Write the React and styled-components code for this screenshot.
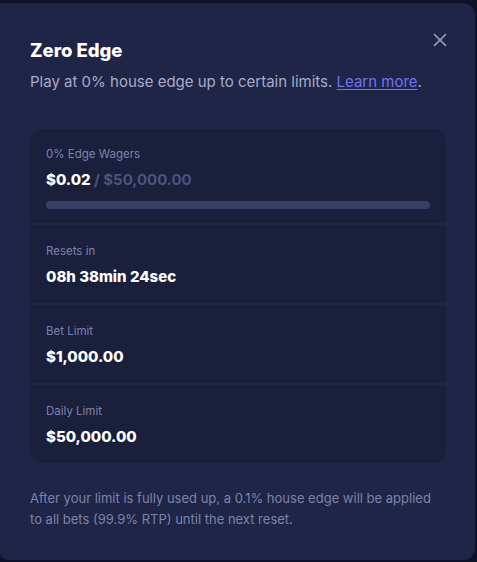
import styled, { createGlobalStyle } from "styled-components";

const Global = createGlobalStyle`
  html, body {
    margin: 0;
    padding: 0;
    background: #0e1128;
  }
  body {
    font-family: Inter, "Noto Sans", sans-serif;
    -webkit-font-smoothing: antialiased;
  }
`

const Modal = styled.div`
  box-sizing: border-box;
  height: 557px;
  margin: 3px 2px 2px 0;
  background: #1f2546;
  border-radius: 0 12px 12px 8px;
  padding: 34px 29px 0 30px;
  position: relative;
`

const Title = styled.h2`
  margin: 0;
  font-size: 18.5px;
  font-weight: 800;
  color: #ffffff;
  line-height: 26px;
`

const Subtitle = styled.p`
  margin: 8px 0 0 0;
  font-size: 15px;
  line-height: 22px;
  color: #a6abc8;
`

const Link = styled.a`
  color: #6d72f6;
  text-decoration: underline;
  text-underline-offset: 2px;
`

const Close = styled.button`
  position: absolute;
  top: 27px;
  right: 25px;
  width: 20px;
  height: 20px;
  padding: 0;
  border: none;
  background: none;
  display: flex;
  align-items: center;
  justify-content: center;
  cursor: pointer;
`

const Card = styled.div`
  margin-top: 36px;
  border-radius: 12px;
  overflow: hidden;
  display: flex;
  flex-direction: column;
  gap: 2px;
  background: #20264a;
`

const Row = styled.div`
  background: #1a1f3c;
  padding: ${(p) => (p.$first ? "18px 16px 16px" : "19px 16px 18px")};
  height: ${(p) => (p.$first ? "94px" : "78px")};
  box-sizing: border-box;
`

const Label = styled.div`
  font-size: 11.5px;
  line-height: 14px;
  color: #7c84ab;
`

const Value = styled.div`
  margin-top: 10px;
  font-size: 15px;
  line-height: 18px;
  font-weight: 800;
  color: #ffffff;
`

const Muted = styled.span`
  color: #4a5380;
  font-weight: 700;
`

const Track = styled.div`
  margin-top: 12px;
  height: 8px;
  border-radius: 4px;
  background: #363f68;
`

const Fill = styled.div`
  height: 100%;
  border-radius: 4px;
  background: #6d72f6;
`

const Note = styled.p`
  margin: 25px 0 0 0;
  font-size: 13px;
  line-height: 21px;
  color: #7c83a9;
`

const stats = [
  { label: "Resets in", value: "08h 38min 24sec" },
  { label: "Bet Limit", value: "$1,000.00" },
  { label: "Daily Limit", value: "$50,000.00" },
]

export default function App() {
  const used = 0.02
  const limit = 50000
  return (
    <>
      <Global />
      <Modal>
        <Title>Zero Edge</Title>
        <Subtitle>
          Play at 0% house edge up to certain limits. <Link href="#">Learn more</Link>.
        </Subtitle>
        <Close aria-label="Close">
          <svg width="14" height="14" viewBox="0 0 14 14" fill="none">
            <path d="M1.5 1.5L12.5 12.5M12.5 1.5L1.5 12.5" stroke="#9ea3bd" strokeWidth="1.6" strokeLinecap="round" />
          </svg>
        </Close>
        <Card>
          <Row $first>
            <Label>0% Edge Wagers</Label>
            <Value>
              $0.02 <Muted>/ $50,000.00</Muted>
            </Value>
            <Track>
              <Fill style={{ width: `${(used / limit) * 100}%` }} />
            </Track>
          </Row>
          {stats.map((s) => (
            <Row key={s.label}>
              <Label>{s.label}</Label>
              <Value>{s.value}</Value>
            </Row>
          ))}
        </Card>
        <Note>
          After your limit is fully used up, a 0.1% house edge will be applied to all bets (99.9% RTP) until the next reset.
        </Note>
      </Modal>
    </>
  )
}
